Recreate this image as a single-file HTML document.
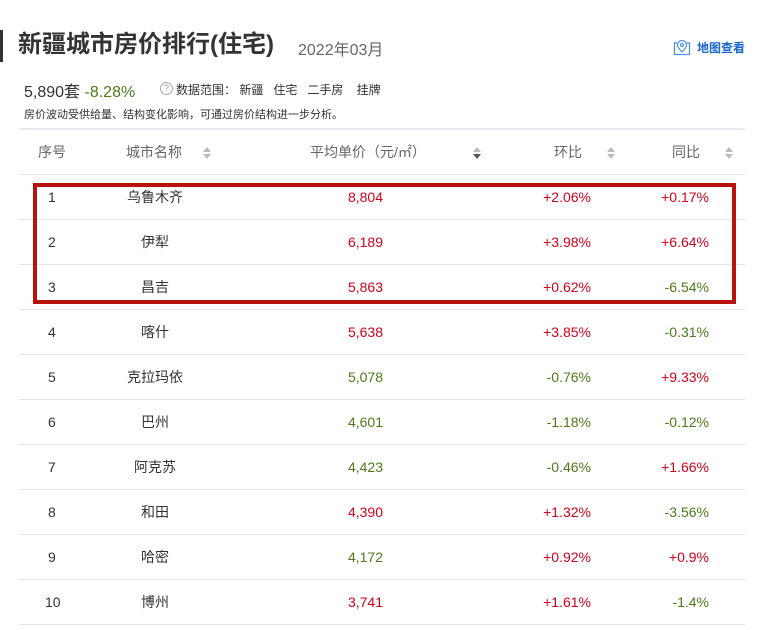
<!DOCTYPE html>
<html><head><meta charset="utf-8"><style>
*{margin:0;padding:0;box-sizing:border-box}
body{width:763px;height:630px;background:#fff;font-family:"Liberation Sans","Noto Sans CJK SC",sans-serif;position:relative;overflow:hidden;color:#333}
.a{position:absolute;white-space:nowrap}
.r{color:#d0021b}.g{color:#4d7a1a}
.line{position:absolute;left:19px;width:726px;height:1px;background:#e6e6e6}
.sort{position:absolute;width:8px;height:12px}
.sort:before{content:"";position:absolute;left:0;top:0;border-left:4px solid transparent;border-right:4px solid transparent;border-bottom:5px solid #bbb}
.sort:after{content:"";position:absolute;left:0;top:7px;border-left:4px solid transparent;border-right:4px solid transparent;border-top:5px solid #bbb}
.sort.d:after{border-top-color:#555}
.td{position:absolute;font-size:14px;line-height:20px}
</style></head><body>
<div class="a" style="left:0;top:30px;width:3px;height:32px;background:#333"></div>
<div class="a" style="left:18px;top:29px;font-size:24px;font-weight:bold;color:#333;line-height:32px">新疆城市房价排行(住宅)</div>
<div class="a" style="left:298px;top:36px;font-size:16px;color:#666">2022年03月</div>
<svg class="a" style="left:673px;top:38px" width="18" height="18" viewBox="0 0 18 18" fill="none" stroke="#4a90e2" stroke-width="1.2"><path d="M4 5H1.5v11.5h15V5H14"/><path d="M9 14c-3-3-4.5-5-4.5-7a4.5 4.5 0 0 1 9 0c0 2-1.5 4-4.5 7z"/><circle cx="9" cy="7" r="1.5"/></svg>
<div class="a" style="left:697px;top:39px;font-size:12px;color:#1a66cc;font-weight:bold">地图查看</div>
<div class="a" style="left:24px;top:78px;font-size:16px;color:#333">5,890套 <span class="g">-8.28%</span></div>
<div class="a" style="left:160px;top:82px;width:13px;height:13px;border:1px solid #aaa;border-radius:50%;font-size:9px;color:#999;text-align:center;line-height:11px">?</div>
<div class="a" style="left:176px;top:81px;font-size:12px;color:#333">数据范围：&nbsp;新疆&nbsp;&nbsp;&nbsp;住宅&nbsp;&nbsp;&nbsp;二手房&nbsp;&nbsp;&nbsp;&nbsp;挂牌</div>
<div class="a" style="left:24px;top:106px;font-size:11px;color:#333">房价波动受供给量、结构变化影响，可通过房价结构进一步分析。</div>
<div class="a" style="left:19px;top:128px;width:726px;height:2px;background:#e8e8ee"></div>
<div class="td a" style="left:38px;top:142px;color:#666">序号</div>
<div class="td a" style="left:126px;top:142px;color:#666">城市名称</div>
<div class="sort" style="left:203px;top:147px"></div>
<div class="td a" style="left:310px;top:142px;color:#666">平均单价（元/㎡）</div>
<div class="sort d" style="left:473px;top:147px"></div>
<div class="td a" style="left:554px;top:142px;color:#666">环比</div>
<div class="sort" style="left:607px;top:147px"></div>
<div class="td a" style="left:672px;top:142px;color:#666">同比</div>
<div class="sort" style="left:725px;top:147px"></div>
<div class="line" style="top:174px"></div>
<div style="position:absolute;left:0;top:0">
<div class="td a" style="left:48px;top:187px">1</div><div class="td a" style="left:105px;top:187px;width:100px;text-align:center">乌鲁木齐</div><div class="td a r" style="left:283px;top:187px;width:100px;text-align:right">8,804</div><div class="td a r" style="left:491px;top:187px;width:100px;text-align:right">+2.06%</div><div class="td a r" style="left:609px;top:187px;width:100px;text-align:right">+0.17%</div><div class="line" style="top:219px"></div>
<div class="td a" style="left:48px;top:232px">2</div><div class="td a" style="left:105px;top:232px;width:100px;text-align:center">伊犁</div><div class="td a r" style="left:283px;top:232px;width:100px;text-align:right">6,189</div><div class="td a r" style="left:491px;top:232px;width:100px;text-align:right">+3.98%</div><div class="td a r" style="left:609px;top:232px;width:100px;text-align:right">+6.64%</div><div class="line" style="top:264px"></div>
<div class="td a" style="left:48px;top:277px">3</div><div class="td a" style="left:105px;top:277px;width:100px;text-align:center">昌吉</div><div class="td a r" style="left:283px;top:277px;width:100px;text-align:right">5,863</div><div class="td a r" style="left:491px;top:277px;width:100px;text-align:right">+0.62%</div><div class="td a g" style="left:609px;top:277px;width:100px;text-align:right">-6.54%</div><div class="line" style="top:309px"></div>
<div class="td a" style="left:48px;top:322px">4</div><div class="td a" style="left:105px;top:322px;width:100px;text-align:center">喀什</div><div class="td a r" style="left:283px;top:322px;width:100px;text-align:right">5,638</div><div class="td a r" style="left:491px;top:322px;width:100px;text-align:right">+3.85%</div><div class="td a g" style="left:609px;top:322px;width:100px;text-align:right">-0.31%</div><div class="line" style="top:354px"></div>
<div class="td a" style="left:48px;top:367px">5</div><div class="td a" style="left:105px;top:367px;width:100px;text-align:center">克拉玛依</div><div class="td a g" style="left:283px;top:367px;width:100px;text-align:right">5,078</div><div class="td a g" style="left:491px;top:367px;width:100px;text-align:right">-0.76%</div><div class="td a r" style="left:609px;top:367px;width:100px;text-align:right">+9.33%</div><div class="line" style="top:399px"></div>
<div class="td a" style="left:48px;top:412px">6</div><div class="td a" style="left:105px;top:412px;width:100px;text-align:center">巴州</div><div class="td a g" style="left:283px;top:412px;width:100px;text-align:right">4,601</div><div class="td a g" style="left:491px;top:412px;width:100px;text-align:right">-1.18%</div><div class="td a g" style="left:609px;top:412px;width:100px;text-align:right">-0.12%</div><div class="line" style="top:444px"></div>
<div class="td a" style="left:48px;top:457px">7</div><div class="td a" style="left:105px;top:457px;width:100px;text-align:center">阿克苏</div><div class="td a g" style="left:283px;top:457px;width:100px;text-align:right">4,423</div><div class="td a g" style="left:491px;top:457px;width:100px;text-align:right">-0.46%</div><div class="td a r" style="left:609px;top:457px;width:100px;text-align:right">+1.66%</div><div class="line" style="top:489px"></div>
<div class="td a" style="left:48px;top:502px">8</div><div class="td a" style="left:105px;top:502px;width:100px;text-align:center">和田</div><div class="td a r" style="left:283px;top:502px;width:100px;text-align:right">4,390</div><div class="td a r" style="left:491px;top:502px;width:100px;text-align:right">+1.32%</div><div class="td a g" style="left:609px;top:502px;width:100px;text-align:right">-3.56%</div><div class="line" style="top:534px"></div>
<div class="td a" style="left:48px;top:547px">9</div><div class="td a" style="left:105px;top:547px;width:100px;text-align:center">哈密</div><div class="td a g" style="left:283px;top:547px;width:100px;text-align:right">4,172</div><div class="td a r" style="left:491px;top:547px;width:100px;text-align:right">+0.92%</div><div class="td a r" style="left:609px;top:547px;width:100px;text-align:right">+0.9%</div><div class="line" style="top:579px"></div>
<div class="td a" style="left:45px;top:592px">10</div><div class="td a" style="left:105px;top:592px;width:100px;text-align:center">博州</div><div class="td a r" style="left:283px;top:592px;width:100px;text-align:right">3,741</div><div class="td a r" style="left:491px;top:592px;width:100px;text-align:right">+1.61%</div><div class="td a g" style="left:609px;top:592px;width:100px;text-align:right">-1.4%</div><div class="line" style="top:624px"></div>
</div>
<div class="a" style="left:33px;top:183px;width:703px;height:121px;border:4px solid #b8120e"></div>
</body></html>
